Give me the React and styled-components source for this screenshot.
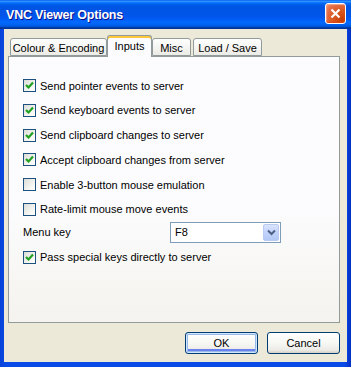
import React from 'react'
import styled, { createGlobalStyle } from 'styled-components'

const GlobalStyle = createGlobalStyle`
  html, body {
    margin: 0;
    padding: 0;
    background: #ece9d8;
  }
  * { box-sizing: border-box; }
`

const Window = styled.div`
  width: 351px;
  height: 367px;
  display: flex;
  flex-direction: column;
  background: linear-gradient(to right, #0843d8 0%, #0a4be8 2%, #0a4be8 98%, #0430c4 100%);
  font-family: 'Liberation Sans', Arial, sans-serif;
  font-size: 11px;
  color: #000;
  overflow: hidden;
`

const TitleBar = styled.div`
  height: 29px;
  flex: none;
  display: flex;
  align-items: center;
  justify-content: space-between;
  padding: 0 5px 0 6px;
  background: linear-gradient(to bottom, #0058ee 0%, #3593ff 4%, #288eff 6%, #127dff 8%, #036ffc 10%, #0262ee 14%, #0057e5 20%, #0054e3 24%, #0055eb 56%, #005bf5 66%, #026afe 76%, #0062ef 86%, #0052d6 92%, #0040ab 94%, #003092 100%);
`

const Title = styled.div`
  color: #fff;
  font-family: 'Liberation Sans', Arial, sans-serif;
  font-weight: 700;
  font-size: 12.5px;
  letter-spacing: -0.2px;
  text-shadow: 1px 1px #0f1089;
  padding-top: 1px;
`

const CloseButton = styled.div`
  width: 21px;
  height: 21px;
  border: 1px solid #fff;
  border-radius: 3px;
  background: radial-gradient(circle at 85% 85%, #c83c00 0%, #dc5a22 45%, #e46a42 70%, #ec8a68 100%);
  box-shadow: inset 0 -1px 1px #da4614, inset 1px 1px 1px #f2a98f;
  display: flex;
  align-items: center;
  justify-content: center;
  margin-bottom: 2px;
`

const Client = styled.div`
  flex: 1;
  margin: 0 4px 5px 4px;
  background: #ece9d8;
  padding: 8px 7px 0 4px;
  display: flex;
  flex-direction: column;
`

const TabStrip = styled.div`
  display: flex;
  align-items: flex-end;
  height: 19px;
  padding-left: 2px;
  position: relative;
  z-index: 1;
`

const Tab = styled.div`
  width: ${p => p.w}px;
  margin-left: ${p => p.gap || 0}px;
  height: ${p => (p.active ? 22 : 18)}px;
  margin-bottom: ${p => (p.active ? -1 : 0)}px;
  border: 1px solid #919b9c;
  border-bottom: ${p => (p.active ? 'none' : '1px solid #919b9c')};
  border-radius: 3px 3px 0 0;
  background: ${p => (p.active ? '#fcfcfe' : 'linear-gradient(to bottom, #ffffff 0%, #f7f7f5 40%, #ecebe5 100%)')};
  box-shadow: ${p => (p.active ? 'inset 0 2px #ffc83c, inset 0 1px #e68b2c' : 'none')};
  display: flex;
  align-items: ${p => (p.active ? 'flex-start' : 'center')};
  justify-content: center;
  padding-top: ${p => (p.active ? 4 : 1)}px;
  white-space: nowrap;
`

const Panel = styled.div`
  width: 332px;
  height: 267px;
  border: 1px solid #919b9c;
  background: linear-gradient(to bottom, #fcfcfe 0%, #fcfcfe 55%, #f4f3ee 100%);
  display: flex;
  flex-direction: column;
  padding: 22px 0 0 14px;
`

const Options = styled.div`
  display: flex;
  flex-direction: column;
  gap: 11.8px;
`

const Row = styled.label`
  display: flex;
  align-items: center;
  gap: 4px;
  height: 13px;
  white-space: nowrap;
`

const Box = styled.span`
  width: 13px;
  height: 13px;
  flex: none;
  border: 1px solid #1c5180;
  background: linear-gradient(135deg, #dcdcd7 0%, #fbfbf9 80%, #ffffff 100%);
  display: flex;
  align-items: center;
  justify-content: center;
`

const MenuRow = styled.div`
  display: flex;
  align-items: center;
  height: 21px;
  margin: 6px 0 8px 0;
`

const MenuLabel = styled.div`
  width: 147px;
`

const Combo = styled.div`
  width: 111px;
  height: 21px;
  border: 1px solid #7f9db9;
  background: #fff;
  display: flex;
  align-items: center;
  justify-content: space-between;
  padding: 1px;
`

const ComboText = styled.div`
  padding-left: 3px;
`

const DropButton = styled.div`
  width: 16px;
  height: 17px;
  border: 1px solid #b9cbf3;
  border-radius: 2px;
  background: linear-gradient(to bottom, #dbe4fd 0%, #c1d3fb 50%, #b4c8f6 100%);
  display: flex;
  align-items: center;
  justify-content: center;
`

const ButtonRow = styled.div`
  display: flex;
  justify-content: flex-end;
  gap: 9px;
  margin-top: 9px;
`

const Button = styled.div`
  width: 73px;
  height: 22px;
  border: 1px solid #003c74;
  border-radius: 3px;
  background: linear-gradient(to bottom, #ffffff 0%, #f7f7f4 50%, #ecebe6 85%, #d6d0c5 100%);
  box-shadow: ${p => (p.primary ? 'inset 0 0 0 1px #cee7ff, inset 0 0 0 2px #98b8ea, inset 0 -2px 0 2px #6982ee' : 'none')};
  display: flex;
  align-items: center;
  justify-content: center;
`

const Check = () => (
  <svg width="9" height="9" viewBox="0 0 9 9">
    <path d="M1 4 L3.5 6.5 L8 1.5" fill="none" stroke="#21a121" strokeWidth="2.2" />
  </svg>
)

const Checkbox = ({ checked, children }) => (
  <Row>
    <Box>{checked && <Check />}</Box>
    <span>{children}</span>
  </Row>
)

const options = [
  ['Send pointer events to server', true],
  ['Send keyboard events to server', true],
  ['Send clipboard changes to server', true],
  ['Accept clipboard changes from server', true],
  ['Enable 3-button mouse emulation', false],
  ['Rate-limit mouse move events', false]
]

const App = () => (
  <>
    <GlobalStyle />
    <Window>
      <TitleBar>
        <Title>VNC Viewer Options</Title>
        <CloseButton>
          <svg width="11" height="11" viewBox="0 0 11 11">
            <path d="M1.5 1.5 L9.5 9.5 M9.5 1.5 L1.5 9.5" stroke="#fff" strokeWidth="2.2" />
          </svg>
        </CloseButton>
      </TitleBar>
      <Client>
        <TabStrip>
          <Tab w={97}>Colour &amp; Encoding</Tab>
          <Tab w={45} active>Inputs</Tab>
          <Tab w={39}>Misc</Tab>
          <Tab w={69} gap={2}>Load / Save</Tab>
        </TabStrip>
        <Panel>
          <Options>
            {options.map(([label, checked]) => (
              <Checkbox key={label} checked={checked}>{label}</Checkbox>
            ))}
          </Options>
          <MenuRow>
            <MenuLabel>Menu key</MenuLabel>
            <Combo>
              <ComboText>F8</ComboText>
              <DropButton>
                <svg width="9" height="7" viewBox="0 0 9 7">
                  <path d="M1 1.5 L4.5 5 L8 1.5" fill="none" stroke="#4d6185" strokeWidth="2" />
                </svg>
              </DropButton>
            </Combo>
          </MenuRow>
          <Checkbox checked>Pass special keys directly to server</Checkbox>
        </Panel>
        <ButtonRow>
          <Button primary>OK</Button>
          <Button>Cancel</Button>
        </ButtonRow>
      </Client>
    </Window>
  </>
)

export default App
